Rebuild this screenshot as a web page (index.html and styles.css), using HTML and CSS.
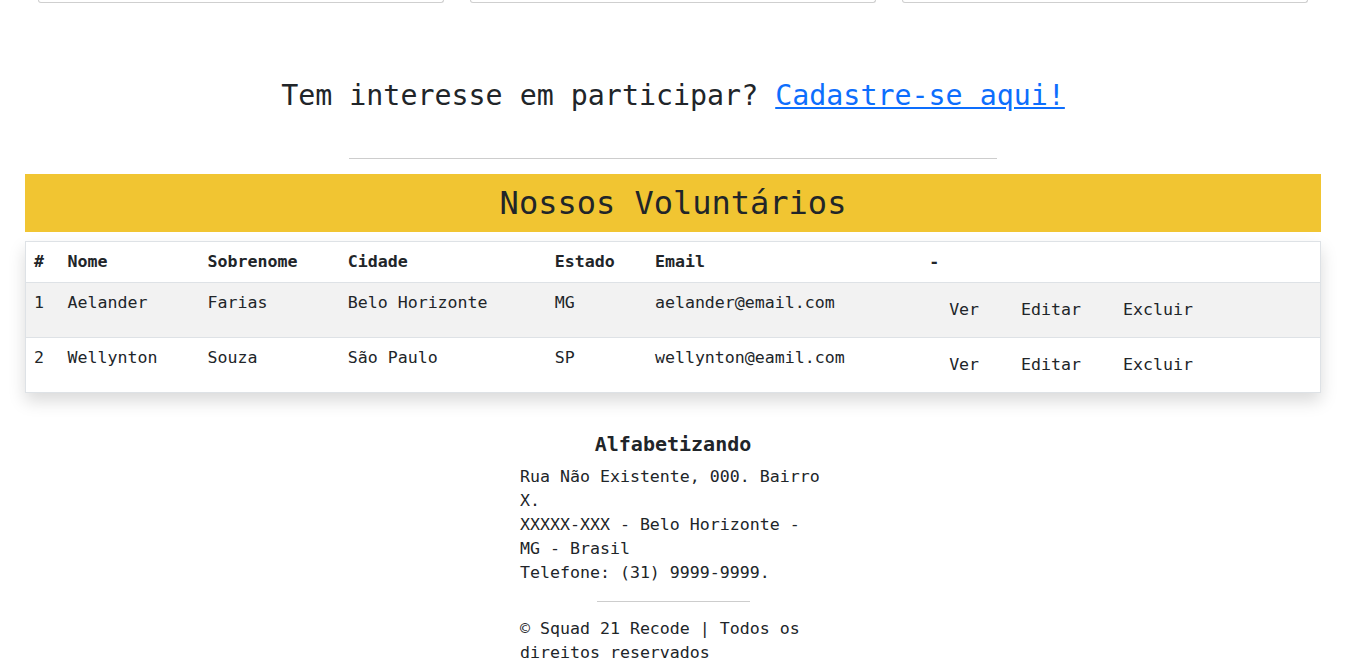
FILE: index.html
```html
<!DOCTYPE html>
<html lang="pt-BR">
<head>
<meta charset="utf-8">
<title>Alfabetizando - Voluntários</title>
<link rel="stylesheet" href="styles.css">
</head>
<body>
<div class="page">
  <div class="cards">
    <div class="card"></div>
    <div class="card"></div>
    <div class="card"></div>
  </div>

  <h3 class="cta">Tem interesse em participar? <a href="#">Cadastre-se aqui!</a></h3>
  <hr class="divider">

  <h2 class="band">Nossos Voluntários</h2>

  <table class="vol-table">
    <colgroup>
      <col class="c-id"><col class="c-nome"><col class="c-sob"><col class="c-cid"><col class="c-est"><col class="c-mail"><col class="c-act">
    </colgroup>
    <thead>
      <tr><th>#</th><th>Nome</th><th>Sobrenome</th><th>Cidade</th><th>Estado</th><th>Email</th><th>-</th></tr>
    </thead>
    <tbody>
      <tr class="striped">
        <td>1</td><td>Aelander</td><td>Farias</td><td>Belo Horizonte</td><td>MG</td><td>aelander@email.com</td>
        <td><div class="actions"><button>Ver</button><button>Editar</button><button>Excluir</button></div></td>
      </tr>
      <tr>
        <td>2</td><td>Wellynton</td><td>Souza</td><td>São Paulo</td><td>SP</td><td>wellynton@eamil.com</td>
        <td><div class="actions"><button>Ver</button><button>Editar</button><button>Excluir</button></div></td>
      </tr>
    </tbody>
  </table>

  <footer class="footer">
    <h4 class="foot-title">Alfabetizando</h4>
    <p class="foot-text">Rua Não Existente, 000. Bairro X.<br>XXXXX-XXX - Belo Horizonte - MG - Brasil<br>Telefone: (31) 9999-9999.</p>
    <hr class="foot-hr">
    <p class="foot-text">© Squad 21 Recode | Todos os direitos reservados</p>
  </footer>
</div>
</body>
</html>
```

FILE: styles.css
```css
html, body {
  margin: 0;
  padding: 0;
  background: #fff;
}
body {
  font-family: "DejaVu Sans Mono", "Liberation Mono", monospace;
  color: #212529;
  font-size: 16.6px;
  line-height: 24px;
}
.page {
  width: 1296px;
  margin-left: 25px;
}
.cards {
  display: flex;
  gap: 26px;
  padding-left: 13px;
}
.card {
  width: 404px;
  height: 2px;
  border: 1px solid #cfcfcf;
  border-top: none;
  border-radius: 0 0 6px 6px;
}
.cta {
  margin: 76px 0 0;
  font-size: 28.3px;
  line-height: 34px;
  font-weight: normal;
  text-align: center;
}
.cta a {
  color: #0d6efd;
  text-decoration: underline;
}
.divider {
  width: 648px;
  margin: 45px auto 0;
  border: none;
  border-top: 1px solid #cdcdcd;
  height: 0;
}
.band {
  margin: 15px 0 0;
  height: 58px;
  background: #f1c532;
  font-size: 32px;
  line-height: 58px;
  font-weight: normal;
  text-align: center;
}
.vol-table {
  margin-top: 9px;
  width: 1296px;
  border-collapse: collapse;
  table-layout: fixed;
  border: 1px solid #dee2e6;
  box-shadow: 0 8px 16px rgba(0, 0, 0, 0.15);
  background: #fff;
}
.c-id { width: 34px; }
.c-nome { width: 140px; }
.c-sob { width: 140px; }
.c-cid { width: 207px; }
.c-est { width: 100px; }
.c-mail { width: 274px; }
.c-act { width: 399px; }
.vol-table th, .vol-table td {
  padding: 8px;
  text-align: left;
  vertical-align: top;
  border-bottom: 1px solid #dee2e6;
  white-space: nowrap;
}
.vol-table th {
  font-weight: bold;
}
.vol-table tr.striped td {
  background: #f2f2f2;
}
.actions {
  display: flex;
  gap: 2px;
}
.actions button {
  font: inherit;
  color: #212529;
  background: transparent;
  border: none;
  padding: 7px 20px;
  line-height: 24px;
  cursor: pointer;
}
.footer {
  width: 306px;
  margin: 39px auto 0;
  padding-bottom: 20px;
}
.foot-title {
  margin: 0;
  font-size: 20px;
  line-height: 24px;
  font-weight: bold;
  text-align: center;
}
.foot-text {
  margin: 9px 0 0;
}
.foot-hr {
  width: 50%;
  margin: 16px auto 0;
  border: none;
  border-top: 1px solid #cdcdcd;
  height: 0;
}
.foot-hr + .foot-text {
  margin-top: 15px;
}
```
